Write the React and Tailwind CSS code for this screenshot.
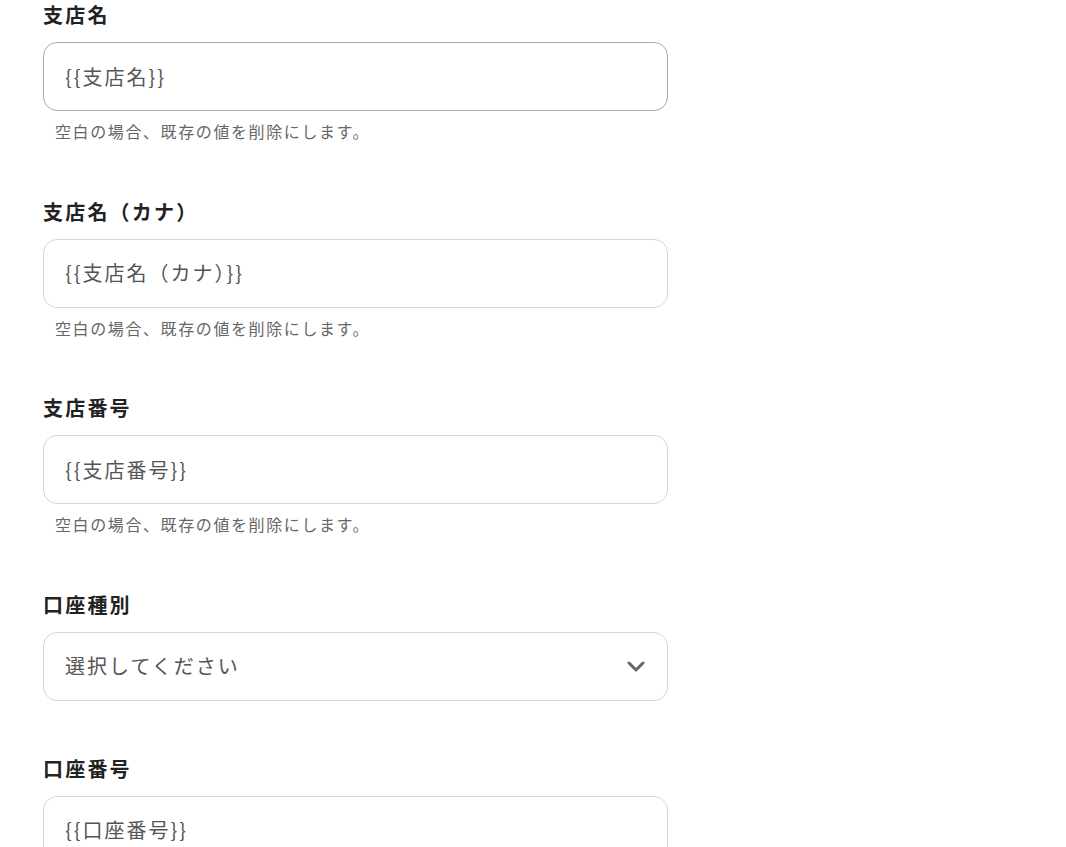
import React from "react";

const font = { fontFamily: '"Noto Sans CJK JP", "Noto Sans", sans-serif' };

function Label({ children }) {
  return (
    <div className="text-[20px] leading-[30px] font-bold text-[#222] tracking-[0.11em] mb-3">
      {children}
    </div>
  );
}

function Field({ label, value, dark, helper = true }) {
  return (
    <div className="mb-[53.5px]">
      <Label>{label}</Label>
      <div
        className={`h-[69px] w-[625px] rounded-[14px] border bg-white flex items-center pl-[21px] text-[20px] text-[#555] tracking-[0.1em] ${
          dark ? "border-[#a8a8a8]" : "border-[#d3d6db]"
        }`}
      >
        {value}
      </div>
      {helper && (
        <div className="mt-2 pl-3 text-[16px] leading-6 text-[#666] tracking-[0.1em]">
          空白の場合、既存の値を削除にします。
        </div>
      )}
    </div>
  );
}

export default function App() {
  return (
    <div className="min-h-screen bg-white pl-[43px]" style={font}>
      <Field label="支店名" value="{{支店名}}" dark />
      <Field label="支店名（カナ）" value="{{支店名（カナ）}}" />
      <Field label="支店番号" value="{{支店番号}}" />
      <div className="mb-[53px]">
        <Label>口座種別</Label>
        <div className="h-[69px] w-[625px] rounded-[14px] border border-[#d3d6db] bg-white flex items-center justify-between pl-[21px] pr-[22px] text-[20px] text-[#555] tracking-[0.1em]">
          <span>選択してください</span>
          <svg width="18" height="11" viewBox="0 0 18 11" fill="none">
            <path d="M2 2l7 7 7-7" stroke="#666" strokeWidth="3" strokeLinecap="round" strokeLinejoin="round" />
          </svg>
        </div>
      </div>
      <Field label="口座番号" value="{{口座番号}}" helper={false} />
    </div>
  );
}
